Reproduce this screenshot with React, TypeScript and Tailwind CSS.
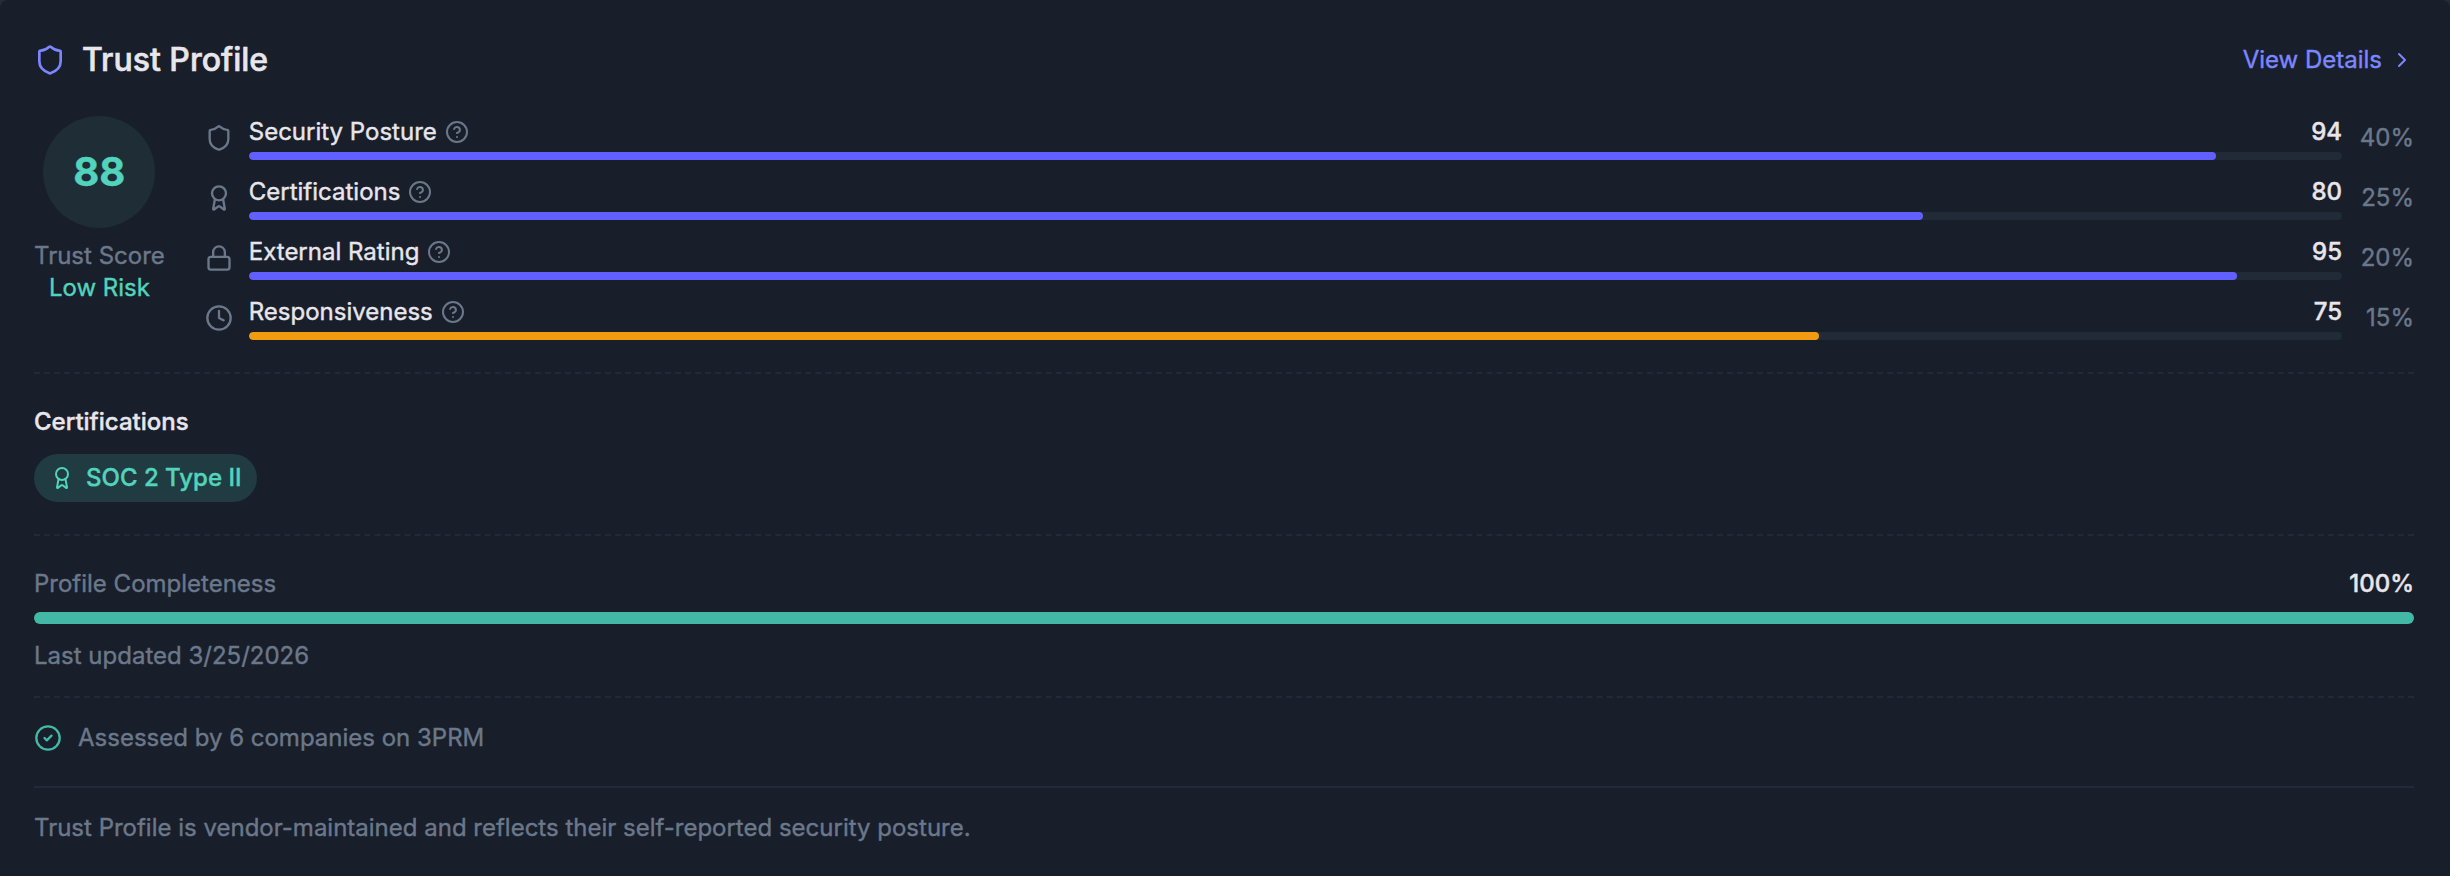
import React from 'react';
import { Award, ChevronRight, CircleCheck, CircleHelp, Clock, Lock, Shield } from 'lucide-react';

const factors = [
    { label: 'Security Posture', icon: Shield, score: 94, weight: '40%', color: 'bg-[#625fff]' },
    { label: 'Certifications', icon: Award, score: 80, weight: '25%', color: 'bg-[#625fff]' },
    { label: 'External Rating', icon: Lock, score: 95, weight: '20%', color: 'bg-[#625fff]' },
    { label: 'Responsiveness', icon: Clock, score: 75, weight: '15%', color: 'bg-[#f19c10]' },
];

const certifications = ['SOC 2 Type II'];

const ScoreFactors: React.FC = () => (
    <div className="flex flex-1 flex-col gap-4">
        {factors.map(({ label, icon: Icon, score, weight, color }) => (
            <div key={label} className="flex items-center gap-4">
                <Icon className="size-7 shrink-0 text-[#6b788a]" />
                <div className="flex-1">
                    <div className="mb-1 flex items-center justify-between">
                        <span className="flex items-center gap-2">
                            {label}
                            <CircleHelp className="size-6 text-[#6b788a]" />
                        </span>
                        <span className="font-medium">{score}</span>
                    </div>
                    <div className="h-2 overflow-hidden rounded-full bg-[#212a37]">
                        <div className={`h-full rounded-full ${color}`} style={{ width: `${score}%` }} />
                    </div>
                </div>
                <span className="w-14 text-right text-[#6b788a]">{weight}</span>
            </div>
        ))}
    </div>
);

const App: React.FC = () => {
    return (
        <div className="bg-[#262c38]">
            <div className="h-[876px] rounded-t-[8px] bg-[#181e2a] pt-10 pr-9 pl-[34px] font-['Inter',sans-serif] text-[24px] leading-8 text-[#e8e6eb] [-webkit-text-stroke:0.4px]">
                {/* Header */}
                <div className="mb-9 flex h-10 items-center justify-between">
                    <div className="flex items-center gap-4">
                        <Shield className="size-8 text-[#7c86ff]" />
                        <h3 className="text-[32px] leading-10 font-medium [-webkit-text-stroke:0.6px]">Trust Profile</h3>
                    </div>
                    <a href="#" className="flex items-center gap-2 text-[#7c86ff]">
                        View Details
                        <ChevronRight className="size-6" />
                    </a>
                </div>

                {/* Score */}
                <div className="flex items-start gap-10 pb-8">
                    <div className="flex flex-col items-center">
                        <div className="mb-3 flex size-28 items-center justify-center rounded-full bg-[#1e2d36] text-[40px] font-bold text-[#52d3bc]">
                            88
                        </div>
                        <span className="text-[#6b788a]">Trust Score</span>
                        <span className="text-[#52d3bc]">Low Risk</span>
                    </div>
                    <ScoreFactors />
                </div>

                {/* Certifications */}
                <div className="border-t-2 border-dashed border-[#212a37] py-8">
                    <h4 className="mb-4 font-medium">Certifications</h4>
                    <div className="flex gap-3">
                        {certifications.map((name) => (
                            <span
                                key={name}
                                className="flex h-12 items-center gap-3 rounded-full bg-[#203b42] px-4 font-medium text-[#52d3bc]"
                            >
                                <Award className="size-6" />
                                {name}
                            </span>
                        ))}
                    </div>
                </div>

                {/* Completeness */}
                <div className="border-t-2 border-dashed border-[#212a37] pt-8 pb-6">
                    <div className="mb-3 flex justify-between">
                        <span className="text-[#6b788a]">Profile Completeness</span>
                        <span className="font-medium">100%</span>
                    </div>
                    <div className="mb-4 h-3 rounded-full bg-[#44b8a6]" />
                    <p className="text-[#6b788a]">Last updated 3/25/2026</p>
                </div>

                <div className="flex items-center gap-4 border-t-2 border-dashed border-[#212a37] pt-6 pb-8 text-[#6b788a]">
                    <CircleCheck className="size-7 text-[#44b8a6]" />
                    Assessed by 6 companies on 3PRM
                </div>

                <p className="border-t-2 border-[#212a37] pt-6 text-[#6b788a]">
                    Trust Profile is vendor-maintained and reflects their self-reported security posture.
                </p>
            </div>
        </div>
    );
};

export default App;
